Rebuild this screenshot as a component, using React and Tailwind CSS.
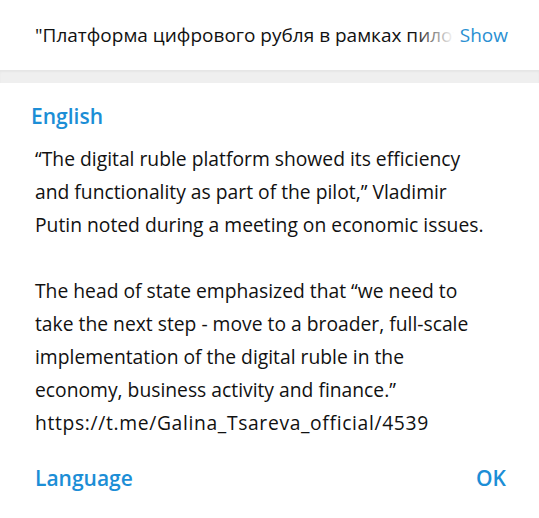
export default function App() {
  const font = { fontFamily: '"Open Sans", "Noto Sans", sans-serif' };
  return (
    <div className="w-[539px] h-[518px] bg-white flex flex-col overflow-hidden" style={font}>
      <div className="h-[70px] flex items-center pl-[35px] pr-[31px] shrink-0">
        <div className="relative flex-1 overflow-hidden whitespace-nowrap text-[19px] text-[#111]">
          "Платформа цифрового рубля в рамках пилотного проекта
          <div className="absolute right-0 top-0 bottom-0 w-[40px] bg-gradient-to-r from-white/0 to-white" />
        </div>
        <button className="ml-[6px] text-[19px] text-[#2a90d2]">Show</button>
      </div>
      <div className="h-[13px] bg-[#efefef] shrink-0 shadow-[inset_0_2px_2px_rgba(0,0,0,0.04)]" />
      <div className="flex-1 flex flex-col pl-[35px] pr-[44px] pt-[19px]">
        <div className="text-[21px] font-semibold text-[#1c8ed6] leading-[28px] -ml-[4px]">English</div>
        <div className="mt-[12px] text-[19.3px] leading-[33px] text-[#111]">
          <p>“The digital ruble platform showed its efficiency and functionality as part of the pilot,” Vladimir Putin noted during a meeting on economic issues.</p>
          <p className="mt-[33px]">
            The head of state emphasized that “we need to take the next step - move to a broader, full-scale implementation of the digital ruble in the economy, business activity and finance.”{" "}
            <span className="tracking-[0.65px]">https://t.me/Galina_Tsareva_official/4539</span>
          </p>
        </div>
        <div className="mt-auto mb-[24px] flex justify-between items-center mr-[-11px]">
          <button className="text-[21px] font-semibold text-[#1c8ed6]">Language</button>
          <button className="text-[21px] font-semibold text-[#1c8ed6]">OK</button>
        </div>
      </div>
    </div>
  );
}
